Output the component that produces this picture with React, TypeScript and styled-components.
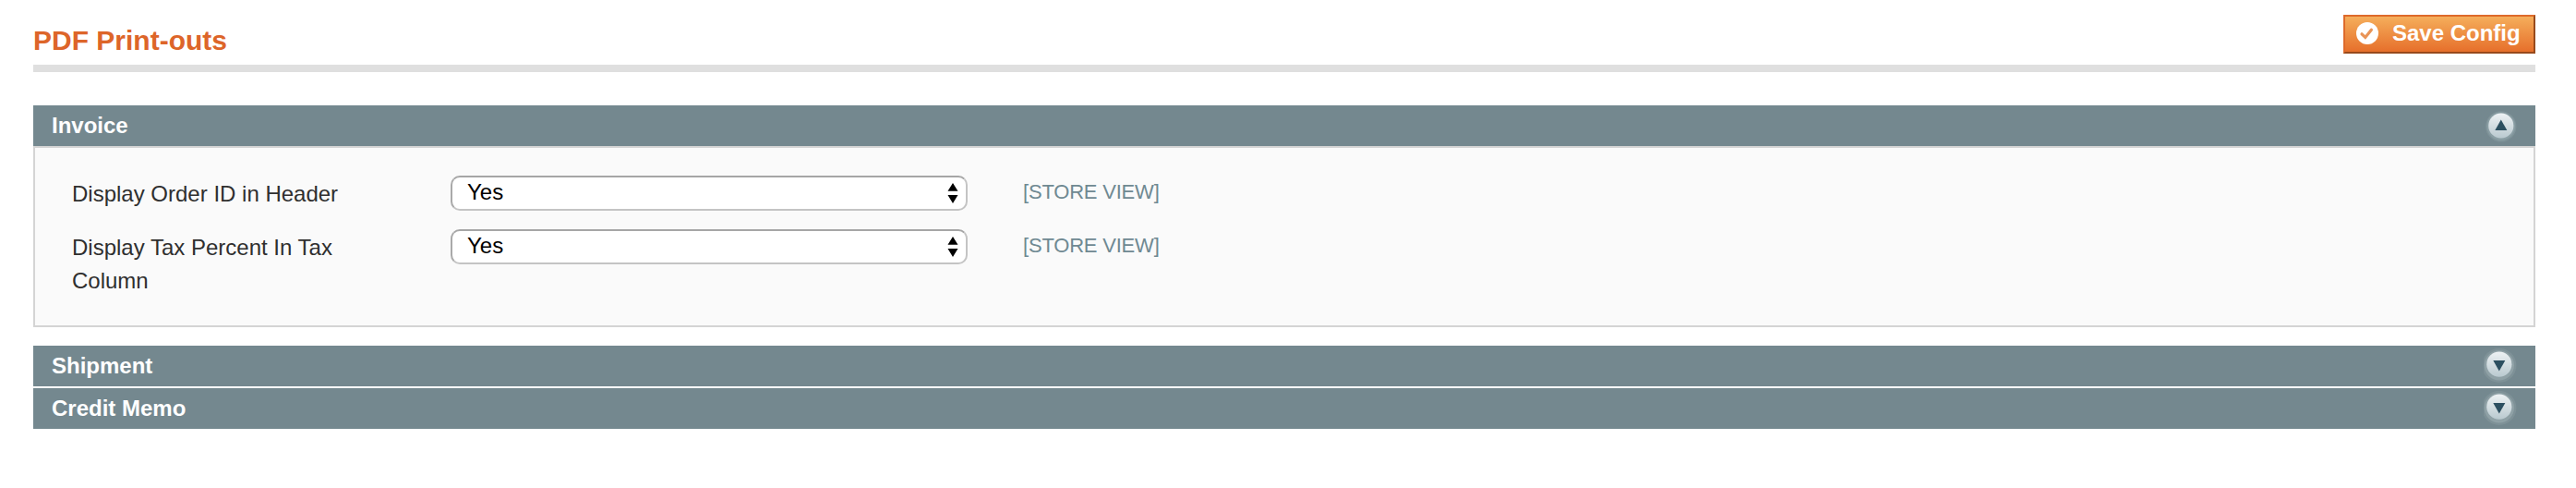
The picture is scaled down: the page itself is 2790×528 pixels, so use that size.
import React from "react";
import styled, { createGlobalStyle } from "styled-components";

const GlobalStyle = createGlobalStyle`
  * { box-sizing: border-box; }
  body {
    margin: 0;
    background: #fff;
    font-family: Arial, "Liberation Sans", sans-serif;
    font-size: 24px;
    color: #2f2f2f;
  }
`;

const Page = styled.main`
  padding: 16px 44px 64px 36px;
`;

const ContentHeader = styled.header`
  display: flex;
  align-items: flex-start;
  justify-content: space-between;
  height: 62px;
  margin-bottom: 36px;
  border-bottom: 8px solid #dfdfdf;
`;

const Title = styled.h3`
  margin: 10px 0 0;
  font-size: 30px;
  line-height: 36px;
  color: #dd6529;
`;

const SaveButton = styled.button`
  display: flex;
  align-items: center;
  gap: 15px;
  width: 208px;
  height: 42px;
  padding: 0 0 2px 12px;
  border: 2px solid;
  border-color: #de6a2b #984a1c #984a1c #de6a2b;
  background: linear-gradient(#f5ae5b, #e66f2b);
  color: #fff;
  font: bold 24px/30px Arial, "Liberation Sans", sans-serif;
  white-space: nowrap;
`;

const SectionBar = styled.div`
  display: flex;
  align-items: center;
  justify-content: space-between;
  height: 44px;
  padding: 0 18px 0 20px;
  background: #74888f;
`;

const SectionTitle = styled.h4`
  margin: 0;
  font-size: 24px;
  line-height: 36px;
  color: #fff;
`;

const Fieldset = styled.div`
  height: 196px;
  margin-bottom: 20px;
  padding: 30px 38px;
  border: 2px solid #d4d4d4;
  background: #fafafa;
`;

const FieldRow = styled.div`
  display: flex;
  align-items: flex-start;
  min-height: 58px;
`;

const Label = styled.label`
  width: 320px;
  margin-right: 92px;
  padding: 2px 0 0 2px;
  line-height: 36px;
`;

const Select = styled.button`
  display: flex;
  align-items: center;
  justify-content: space-between;
  width: 560px;
  height: 38px;
  padding: 0 8px 0 16px;
  border: 2px solid;
  border-color: #a6a6a6 #c4c4c4 #c4c4c4 #a9a9a9;
  border-radius: 10px;
  background: #fff;
  color: #000;
  font: 24px/30px Arial, "Liberation Sans", sans-serif;
`;

const SelectValue = styled.span`
  padding-bottom: 2px;
`;

const Scope = styled.span`
  margin-left: 60px;
  font-size: 22px;
  line-height: 36px;
  letter-spacing: -0.2px;
  color: #6f8992;
`;

const CollapsedSections = styled.div`
  display: grid;
  gap: 2px;
`;

const CheckIcon = () => (
  <svg width="24" height="24" viewBox="0 0 24 24">
    <circle cx="12" cy="12" r="12" fill="#fff" />
    <path
      d="M6 12.8l3.8 3.7 6.6-8.2"
      fill="none"
      stroke="#e99457"
      strokeWidth="3.2"
      strokeLinecap="round"
    />
  </svg>
);

const DiscGradient = () => (
  <defs>
    <linearGradient id="disc" x1="0" y1="0" x2="0" y2="1">
      <stop offset="0" stopColor="#eef2f4" />
      <stop offset="1" stopColor="#b9c9cf" />
    </linearGradient>
  </defs>
);

const CollapseIcon = () => (
  <svg width="38" height="38" viewBox="0 0 38 38">
    <DiscGradient />
    <circle cx="18.8" cy="19.8" r="16.6" fill="#7f9399" />
    <circle cx="18.8" cy="19.6" r="15.2" fill="#8b9fa5" />
    <circle cx="18.8" cy="19" r="13.6" fill="url(#disc)" />
    <path d="M12.3 24h13L18.8 12.5z" fill="#2c4f60" />
  </svg>
);

const ExpandIcon = () => (
  <svg width="38" height="38" viewBox="0 0 38 38">
    <DiscGradient />
    <circle cx="16.8" cy="18.4" r="18.6" fill="#7e9197" />
    <circle cx="16.8" cy="18.2" r="16.2" fill="#8fa1a6" />
    <circle cx="16.8" cy="17.2" r="13.6" fill="url(#disc)" />
    <path d="M10.3 13h13L16.8 24.5z" fill="#2c4f60" />
  </svg>
);

const SelectArrows = () => (
  <svg width="12" height="22" viewBox="0 0 12 22">
    <path d="M0.5 8.7h11L6 0zM0.5 13h11L6 22z" fill="#000" />
  </svg>
);

const fields = ["Display Order ID in Header", "Display Tax Percent In Tax Column"];

export default function App() {
  return (
    <>
      <GlobalStyle />
      <Page>
        <ContentHeader>
          <Title>PDF Print-outs</Title>
          <SaveButton>
            <CheckIcon />
            Save Config
          </SaveButton>
        </ContentHeader>
        <SectionBar>
          <SectionTitle>Invoice</SectionTitle>
          <CollapseIcon />
        </SectionBar>
        <Fieldset>
          {fields.map((field) => (
            <FieldRow key={field}>
              <Label>{field}</Label>
              <Select>
                <SelectValue>Yes</SelectValue>
                <SelectArrows />
              </Select>
              <Scope>[STORE VIEW]</Scope>
            </FieldRow>
          ))}
        </Fieldset>
        <CollapsedSections>
          {["Shipment", "Credit Memo"].map((name) => (
            <SectionBar key={name}>
              <SectionTitle>{name}</SectionTitle>
              <ExpandIcon />
            </SectionBar>
          ))}
        </CollapsedSections>
      </Page>
    </>
  );
}
